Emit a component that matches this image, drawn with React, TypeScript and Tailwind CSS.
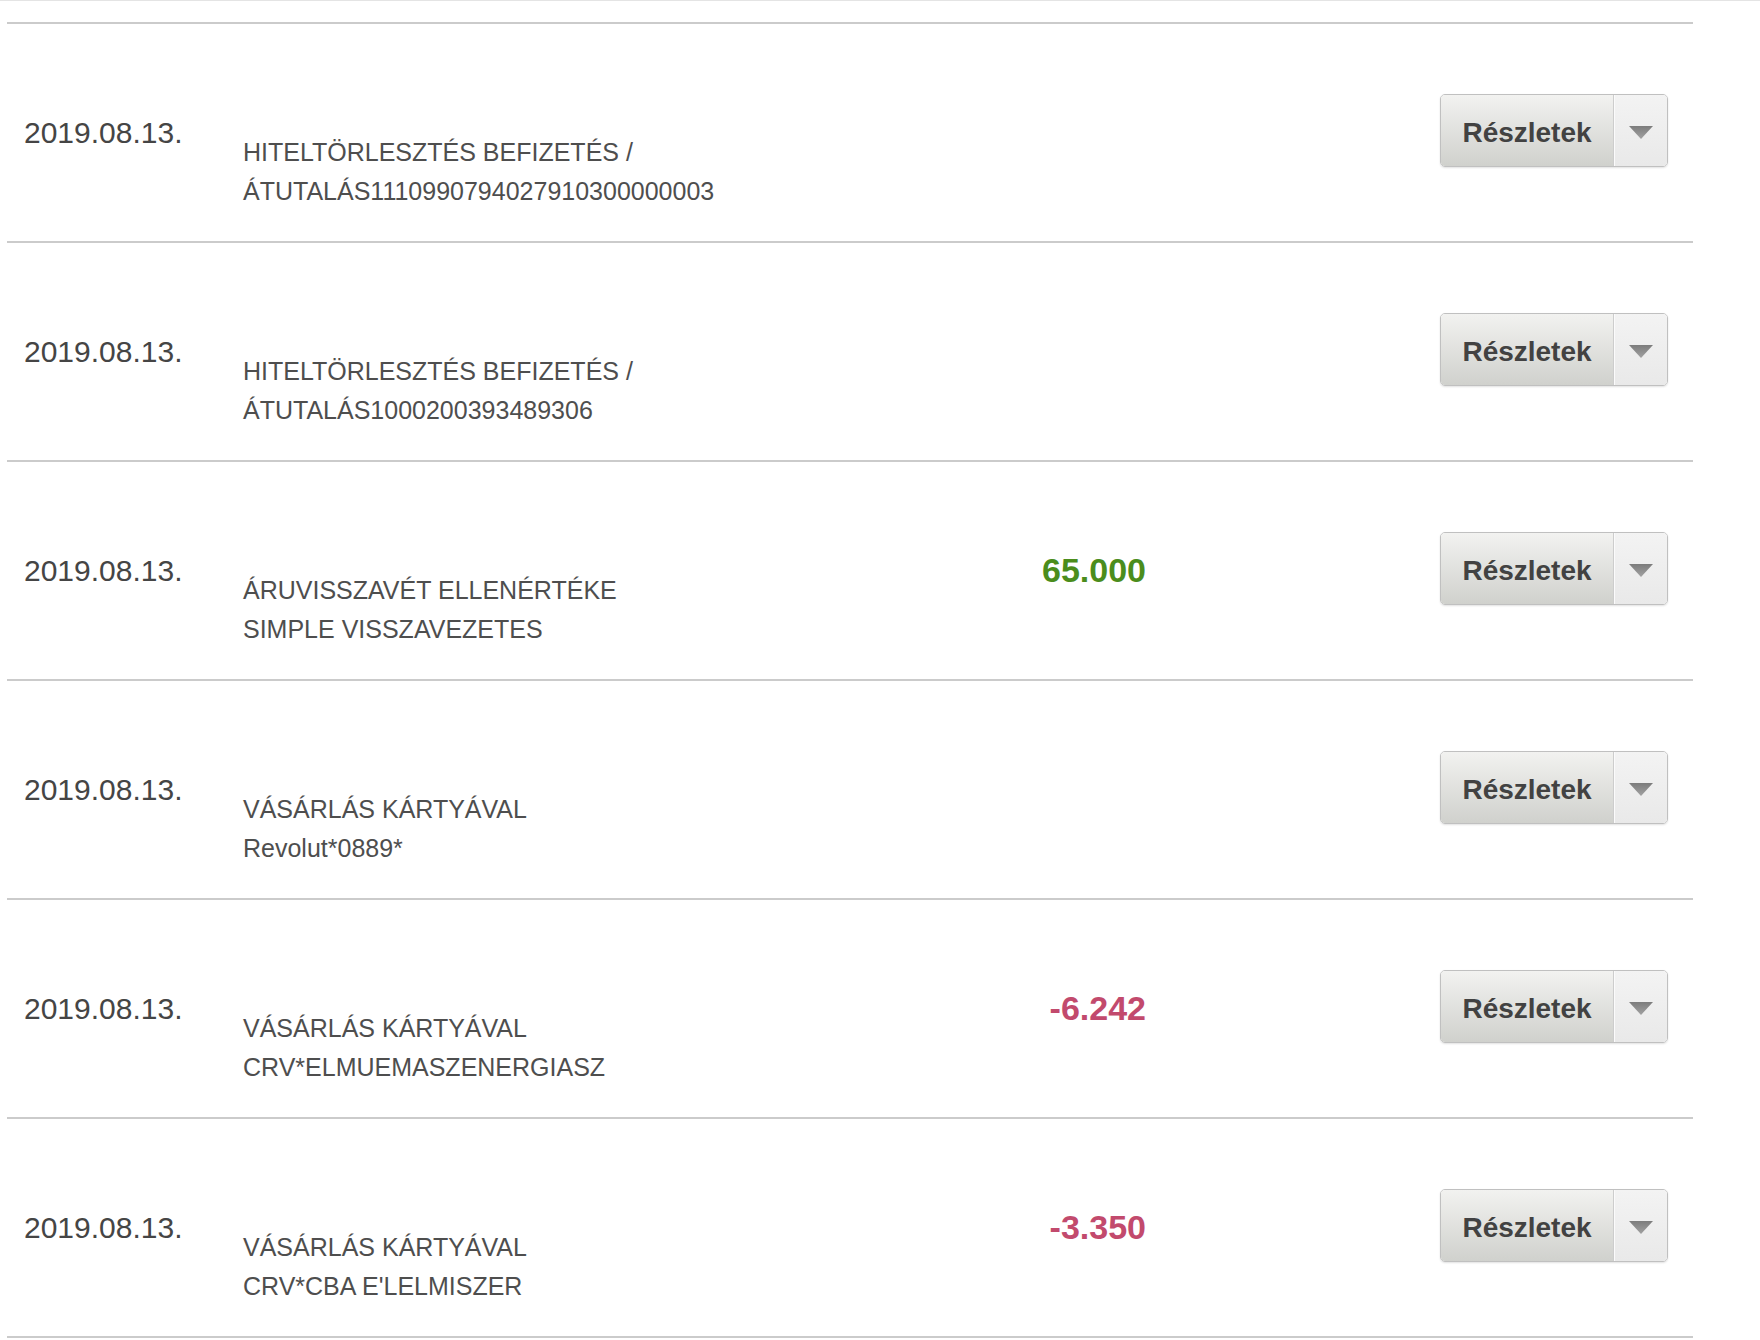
import React from "react";

type Row = { l1: string; l2: string; amount?: string; positive?: boolean };

const rows: Row[] = [
  { l1: "HITELTÖRLESZTÉS BEFIZETÉS /", l2: "ÁTUTALÁS1110990794027910300000003" },
  { l1: "HITELTÖRLESZTÉS BEFIZETÉS /", l2: "ÁTUTALÁS1000200393489306" },
  { l1: "ÁRUVISSZAVÉT ELLENÉRTÉKE", l2: "SIMPLE VISSZAVEZETES", amount: "65.000", positive: true },
  { l1: "VÁSÁRLÁS KÁRTYÁVAL", l2: "Revolut*0889*" },
  { l1: "VÁSÁRLÁS KÁRTYÁVAL", l2: "CRV*ELMUEMASZENERGIASZ", amount: "-6.242", positive: false },
  { l1: "VÁSÁRLÁS KÁRTYÁVAL", l2: "CRV*CBA E'LELMISZER", amount: "-3.350", positive: false },
];

function DetailsButton() {
  return (
    <div className="flex h-[73px] w-[228px] overflow-hidden rounded-[5px] border border-[#c0c0c0] shadow-[0_1px_2px_rgba(0,0,0,0.12)]">
      <div className="flex w-[172px] items-center justify-center bg-gradient-to-b from-[#f2f2f0] to-[#d0d1cd] pt-[4px] text-[28px] font-bold text-[#424242]">
        Részletek
      </div>
      <div className="w-px bg-[#cdcdcd]" />
      <div className="w-px bg-[#fbfbfb]" />
      <div className="flex flex-1 items-center justify-center bg-gradient-to-b from-[#f3f3f3] to-[#e9e9e9] pt-[4px]">
        <svg width="24" height="13" viewBox="0 0 24 13">
          <defs>
            <linearGradient id="tri" x1="0" y1="0" x2="0" y2="1">
              <stop offset="0" stopColor="#7c7c7c" />
              <stop offset="1" stopColor="#a2a2a2" />
            </linearGradient>
          </defs>
          <polygon points="0,0 24,0 12,13" fill="url(#tri)" />
        </svg>
      </div>
    </div>
  );
}

export default function App() {
  return (
    <div
      className="min-h-[1340px] w-[1760px] bg-white"
      style={{ fontFamily: '"Liberation Sans", Arial, sans-serif' }}
    >
      <div className="h-px w-full bg-[#e4e4e4]" />
      <div className="ml-[7px] mt-[21px] w-[1686px] border-t-2 border-[#cbcbcb]">
        {rows.map((r, i) => (
          <div key={i} className="flex h-[219px] border-b-2 border-[#cbcbcb] pl-[17px] pr-[25px]">
            <div className="mt-[91px] w-[219px] text-[30px] leading-[36px] text-[#454545]">2019.08.13.</div>
            <div className="mt-[109px] w-[640px] text-[25px] leading-[39px] text-[#4e4e4e]">
              <div>{r.l1}</div>
              <div>{r.l2}</div>
            </div>
            <div
              className={
                "mt-[88px] w-[263px] text-right text-[34px] font-bold leading-[40px] " +
                (r.positive ? "text-[#4b8d1c]" : "text-[#c24a6d]")
              }
            >
              {r.amount ?? ""}
            </div>
            <div className="ml-auto mt-[70px]">
              <DetailsButton />
            </div>
          </div>
        ))}
      </div>
    </div>
  );
}
